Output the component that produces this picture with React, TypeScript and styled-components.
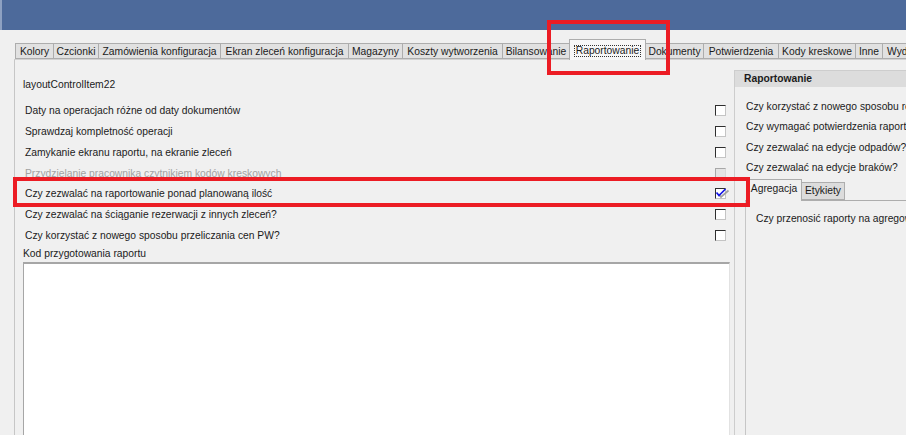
import React from "react";
import styled, { createGlobalStyle, css } from "styled-components";

const GlobalStyle = createGlobalStyle`
  html, body {
    margin: 0;
    padding: 0;
    background: #f0f0f0;
  }
  body {
    font-family: "Liberation Sans", Arial, sans-serif;
    font-size: 10.3px;
    color: #1b1b1b;
  }
`;

const mainTabs = [
  { label: "Kolory", w: 39 },
  { label: "Czcionki", w: 45 },
  { label: "Zamówienia konfiguracja", w: 122 },
  { label: "Ekran zleceń konfiguracja", w: 128 },
  { label: "Magazyny", w: 54 },
  { label: "Koszty wytworzenia", w: 100 },
  { label: "Bilansowanie", w: 67 },
  { label: "Raportowanie", w: 76, active: true },
  { label: "Dokumenty", w: 58 },
  { label: "Potwierdzenia", w: 75 },
  { label: "Kody kreskowe", w: 77 },
  { label: "Inne", w: 27 },
  { label: "Wydruki", w: 44 },
];

const options = [
  { label: "Daty na operacjach różne od daty dokumentów" },
  { label: "Sprawdzaj kompletność operacji" },
  { label: "Zamykanie ekranu raportu, na ekranie zleceń" },
  { label: "Przydzielanie pracownika czytnikiem kodów kreskowych", disabled: true },
  { label: "Czy zezwalać na raportowanie ponad planowaną ilość", checked: true },
  { label: "Czy zezwalać na ściąganie rezerwacji z innych zleceń?" },
  { label: "Czy korzystać z nowego sposobu przeliczania cen PW?" },
];

const sideOptions = [
  "Czy korzystać z nowego sposobu rozliczania raportów",
  "Czy wymagać potwierdzenia raportów",
  "Czy zezwalać na edycje odpadów?",
  "Czy zezwalać na edycje braków?",
];

const App = () => {
  return (
    <Root>
      <GlobalStyle />
      <TitleBar />
      <TabStrip>
        {mainTabs.map((t) => (
          <Tab key={t.label} $w={t.w} $active={t.active}>
            {t.active ? <Focus>{t.label}</Focus> : t.label}
          </Tab>
        ))}
      </TabStrip>
      <Page>
        <LeftCol>
          <ItemLabel>layoutControlItem22</ItemLabel>
          {options.map((o) => (
            <OptionRow key={o.label} $disabled={o.disabled}>
              <span>{o.label}</span>
              <Check $disabled={o.disabled}>
                {o.checked && (
                  <svg width="15" height="11" viewBox="0 0 15 11">
                    <path d="M3.5 6 L6 9 L13.5 2.5" fill="none" stroke="#a0a0a0" strokeWidth="1.7" />
                    <path d="M1.5 4.5 L4 7.5 L10.5 1" fill="none" stroke="#1414e6" strokeWidth="1.7" />
                  </svg>
                )}
              </Check>
            </OptionRow>
          ))}
          <CodeLabel>Kod przygotowania raportu</CodeLabel>
          <CodeArea />
        </LeftCol>
        <RightCol>
          <GroupHeader>Raportowanie</GroupHeader>
          <SideList>
            {sideOptions.map((s) => (
              <SideRow key={s}>{s}</SideRow>
            ))}
          </SideList>
          <InnerTabs>
            <InnerStrip>
              <InnerTab $w={56} $active>
                Agregacja
              </InnerTab>
              <InnerTab $w={43}>Etykiety</InnerTab>
            </InnerStrip>
            <InnerPage>
              <SideRow>Czy przenosić raporty na agregowane zlecenia</SideRow>
            </InnerPage>
          </InnerTabs>
        </RightCol>
      </Page>
      <Marker $left={547} $top={20} $w={123} $h={55} />
      <Marker $left={13} $top={177} $w={737} $h={30} />
    </Root>
  );
};

export default App;

const Root = styled.div`
  position: relative;
  width: 906px;
  height: 435px;
  overflow: hidden;
  white-space: nowrap;
  display: flex;
  flex-direction: column;
`;

const TitleBar = styled.div`
  height: 30px;
  flex: none;
  background: #4d6a9b;
  border-left: 2px solid #8ea1c2;
`;

const TabStrip = styled.div`
  display: flex;
  align-items: flex-end;
  height: 20px;
  margin-top: 9px;
  padding-left: 15px;
  flex: none;
  position: relative;
  z-index: 1;
`;

const Tab = styled.div<{ $w: number; $active?: boolean }>`
  box-sizing: border-box;
  flex: none;
  width: ${(p) => p.$w}px;
  height: 16px;
  display: flex;
  align-items: center;
  justify-content: center;
  background: #e1e1e1;
  border: 1px solid #adadad;
  border-left: none;
  color: #1b1b1b;
  &:first-child {
    border-left: 1px solid #adadad;
  }
  &:last-child {
    justify-content: flex-start;
    padding-left: 4px;
  }
  ${(p) =>
    p.$active &&
    css`
      height: 21px;
      margin-bottom: -1px;
      padding-top: 2px;
      background: #f7f7f7;
      border-bottom: none;
      border-left: 1px solid #adadad;
      margin-left: -1px;
      width: ${p.$w + 1}px;
    `}
`;

const Focus = styled.span`
  border: 1px dotted #333;
  padding: 0 1px;
  line-height: 10px;
`;

const Page = styled.div`
  flex: 1;
  display: grid;
  grid-template-columns: 719px 1fr;
  margin-left: 14px;
  border-left: 1px solid #c6c6c6;
  border-top: 1px solid #d2d2d2;
  min-height: 0;
`;

const LeftCol = styled.div`
  display: flex;
  flex-direction: column;
  padding-top: 15px;
`;

const ItemLabel = styled.div`
  height: 20px;
  line-height: 20px;
  padding-left: 8px;
  margin-bottom: 5.6px;
`;

const OptionRow = styled.div<{ $disabled?: boolean }>`
  height: 20.7px;
  display: flex;
  align-items: center;
  justify-content: space-between;
  padding-left: 10px;
  padding-right: 8px;
  color: ${(p) => (p.$disabled ? "#a2a2a2" : "#1b1b1b")};
`;

const Check = styled.div<{ $disabled?: boolean }>`
  position: relative;
  box-sizing: border-box;
  width: 11px;
  height: 11px;
  background: ${(p) => (p.$disabled ? "#e4e4e4" : "#ffffff")};
  border: 1px solid;
  border-color: ${(p) =>
    p.$disabled ? "#a8a8a8 #d8d8d8 #d8d8d8 #a8a8a8" : "#2e2e2e #c4c4c4 #c4c4c4 #2e2e2e"};
  svg {
    position: absolute;
    left: -1px;
    top: -1px;
    overflow: visible;
  }
`;

const CodeLabel = styled.div`
  height: 17px;
  line-height: 17px;
  padding-left: 8px;
`;

const CodeArea = styled.div`
  flex: 1;
  margin-left: 8px;
  margin-right: 4px;
  background: #ffffff;
  border-top: 2px solid #a6a6a6;
  border-left: 1px solid #a6a6a6;
  border-right: 1px solid #e2e2e2;
`;

const RightCol = styled.div`
  display: flex;
  flex-direction: column;
  margin-top: 10px;
  border-left: 1px solid #cdcdcd;
  border-top: 1px solid #cdcdcd;
`;

const GroupHeader = styled.div`
  height: 16px;
  line-height: 16px;
  padding-left: 9px;
  background: #dcdcdc;
  font-weight: bold;
  color: #1b1b1b;
`;

const SideList = styled.div`
  padding-top: 9.5px;
  padding-left: 11px;
`;

const SideRow = styled.div`
  height: 20.5px;
  line-height: 20.5px;
`;

const InnerTabs = styled.div`
  flex: 1;
  display: flex;
  flex-direction: column;
  margin-left: 10px;
`;

const InnerStrip = styled.div`
  display: flex;
  align-items: flex-end;
  height: 21px;
  padding-left: 1px;
  position: relative;
  z-index: 1;
`;

const InnerTab = styled.div<{ $w: number; $active?: boolean }>`
  box-sizing: border-box;
  width: ${(p) => p.$w}px;
  height: ${(p) => (p.$active ? 22 : 18)}px;
  margin-bottom: ${(p) => (p.$active ? -1 : 0)}px;
  padding-bottom: ${(p) => (p.$active ? 3 : 0)}px;
  display: flex;
  align-items: center;
  justify-content: center;
  background: ${(p) => (p.$active ? "#f0f0f0" : "#dcdcdc")};
  border: 1px solid #adadad;
  border-bottom: ${(p) => (p.$active ? "none" : "1px solid #adadad")};
  border-left: ${(p) => (p.$active ? "1px solid #adadad" : "none")};
`;

const InnerPage = styled.div`
  flex: 1;
  border-top: 1px solid #adadad;
  border-left: 1px solid #c6c6c6;
  padding-top: 8px;
  padding-left: 10px;
`;

const Marker = styled.div<{ $left: number; $top: number; $w: number; $h: number }>`
  position: absolute;
  box-sizing: border-box;
  left: ${(p) => p.$left}px;
  top: ${(p) => p.$top}px;
  width: ${(p) => p.$w}px;
  height: ${(p) => p.$h}px;
  border: 4px solid #ec1c24;
  z-index: 5;
  pointer-events: none;
`;
